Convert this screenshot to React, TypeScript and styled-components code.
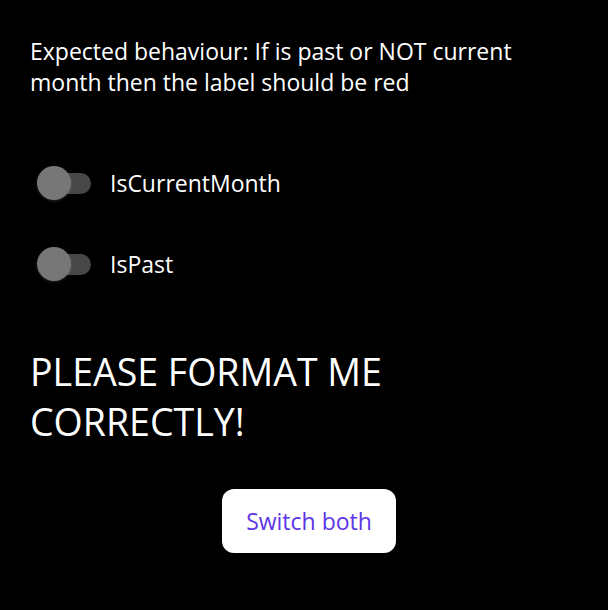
import React, { useState } from "react";
import styled, { createGlobalStyle } from "styled-components";

const Global = createGlobalStyle`
  html, body { margin: 0; padding: 0; background: #000; }
  body { font-family: "Open Sans", "Noto Sans", sans-serif; color: #fff; }
`;

const Page = styled.div`
  display: flex;
  flex-direction: column;
  align-items: stretch;
  padding: 36px 20px 0 30px;
  min-height: 610px;
  box-sizing: border-box;
  background: #000;
`;

const Intro = styled.p`
  margin: 0;
  font-size: 23px;
  line-height: 31px;
`;

const SwitchList = styled.div`
  display: flex;
  flex-direction: column;
  gap: 47px;
  margin-top: 68px;
`;

const Row = styled.label`
  display: flex;
  align-items: center;
  gap: 19px;
  height: 34px;
  cursor: pointer;
`;

const Track = styled.span<{ $on: boolean }>`
  position: relative;
  display: inline-block;
  width: 51px;
  height: 21px;
  margin-left: 10px;
  border-radius: 11px;
  background: ${(p) => (p.$on ? "#7e5ce8" : "#474747")};
`;

const Thumb = styled.span<{ $on: boolean }>`
  position: absolute;
  top: 50%;
  left: ${(p) => (p.$on ? "20px" : "-3px")};
  width: 34px;
  height: 34px;
  margin-top: -17px;
  border-radius: 50%;
  background: ${(p) => (p.$on ? "#5b3bea" : "#777")};
  box-shadow: 0 1px 3px rgba(255, 255, 255, 0.15);
`;

const RowLabel = styled.span`
  font-size: 23px;
  line-height: 30px;
`;

const Heading = styled.h1<{ $red: boolean }>`
  margin: 66px 0 0 0;
  font-size: 37.5px;
  line-height: 50px;
  font-weight: 400;
  color: ${(p) => (p.$red ? "#ff3b30" : "#fff")};
  max-width: 400px;
`;

const ButtonWrap = styled.div`
  display: flex;
  justify-content: center;
  margin-top: 42px;
`;

const Button = styled.button`
  width: 174px;
  height: 64px;
  border: none;
  border-radius: 12px;
  background: #fff;
  color: #5b35e6;
  font-family: "Open Sans", "Noto Sans", sans-serif;
  font-size: 23px;
  cursor: pointer;
`;

function Toggle({ on, onChange, label }: { on: boolean; onChange: () => void; label: string }) {
  return (
    <Row onClick={onChange}>
      <Track $on={on}>
        <Thumb $on={on} />
      </Track>
      <RowLabel>{label}</RowLabel>
    </Row>
  );
}

export default function App() {
  const [current, setCurrent] = useState(false);
  const [past, setPast] = useState(false);
  return (
    <>
      <Global />
      <Page>
        <Intro>
          Expected behaviour: If is past or NOT current month then the label should be red
        </Intro>
        <SwitchList>
          <Toggle on={current} onChange={() => setCurrent(!current)} label="IsCurrentMonth" />
          <Toggle on={past} onChange={() => setPast(!past)} label="IsPast" />
        </SwitchList>
        <Heading $red={false}>PLEASE FORMAT ME CORRECTLY!</Heading>
        <ButtonWrap>
          <Button
            onClick={() => {
              setCurrent(!current);
              setPast(!past);
            }}
          >
            Switch both
          </Button>
        </ButtonWrap>
      </Page>
    </>
  );
}
